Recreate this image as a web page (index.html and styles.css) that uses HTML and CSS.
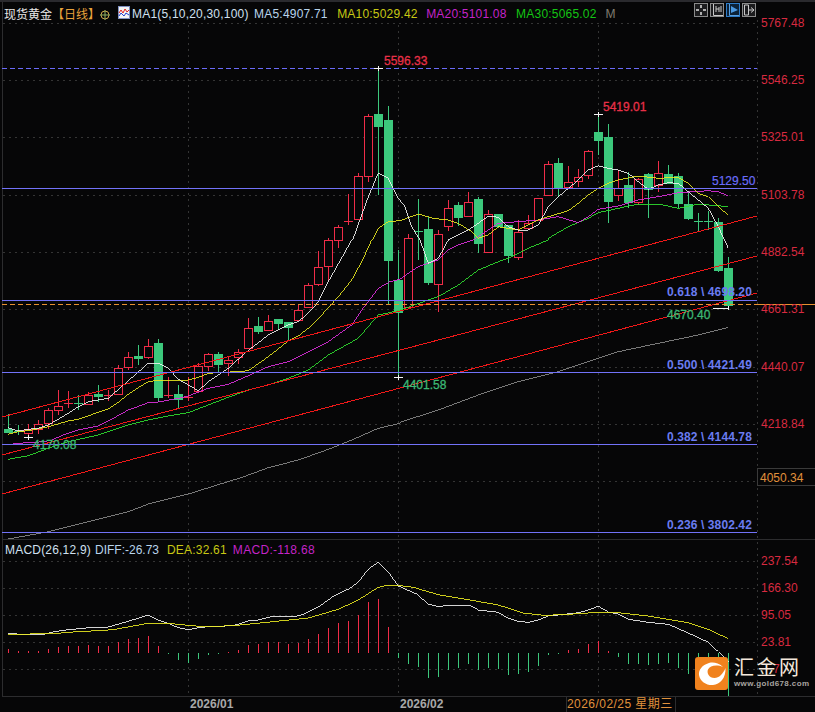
FILE: index.html
```html
<!DOCTYPE html>
<html lang="zh-CN">
<head>
<meta charset="utf-8">
<title>现货黄金 日线</title>
<link rel="stylesheet" href="styles.css">
</head>
<body>
<div class="terminal">
  <svg class="plot" id="plot" width="815" height="712" viewBox="0 0 815 712" xmlns="http://www.w3.org/2000/svg"></svg>

  <header class="legend">
    <span class="symbol">现货黄金</span><span class="period">【日线】</span>
    <svg class="zoom-icon" width="10" height="10" viewBox="0 0 10 10"><circle cx="5" cy="5" r="4" fill="none" stroke="#c9a24a"/><path d="M0 5H10M5 0V10" stroke="#8fb060"/></svg>
    <svg class="ma-icon" width="12" height="13" viewBox="0 0 12 13"><rect x=".5" y=".5" width="11" height="12" fill="#f4f4f4" stroke="#8090c0"/><path d="M1 7L3 4L5 7L7 3L9 6L11 4" fill="none" stroke="#e02020"/><path d="M1 10L3 7L6 10L8 7L11 9" fill="none" stroke="#2040d0"/></svg>
    <span class="val c-ma1">MA1(5,10,20,30,100)</span>
    <span class="val c-ma5">MA5:4907.71</span>
    <span class="val c-ma10">MA10:5029.42</span>
    <span class="val c-ma20">MA20:5101.08</span>
    <span class="val c-ma30">MA30:5065.02</span>
    <span class="val c-m">M</span>
    <div class="tools">
      <span class="tool"><svg width="12" height="12" viewBox="0 0 12 12"><path d="M6 1v3M6 8v3M1 6h3M8 6h3" stroke="#b0b0b0" stroke-width="2"/></svg></span>
      <span class="tool"><svg width="12" height="12" viewBox="0 0 12 12"><path d="M2.5 0v11.5H12M5 2v6M8 3v5M10 2v6M5 5h3" stroke="#c8c8c8" fill="none"/></svg></span>
      <span class="tool on"><svg width="12" height="12" viewBox="0 0 12 12"><path d="M2.5 0v11.5H12" stroke="#5aa0e0" fill="none"/><path d="M4 2L11 6L4 9Z" fill="#4a98e0"/></svg></span>
      <span class="tool"><svg width="12" height="12" viewBox="0 0 12 12"><path d="M1.5 1h4v10h-4zM5.5 6H11M8 3.500L11 6L8 8.500" stroke="#c8c8c8" fill="none"/></svg></span>
    </div>
  </header>

  <div class="macd-legend">
    <span class="val c-ma1">MACD(26,12,9)</span>
    <span class="val c-ma5">DIFF:-26.73</span>
    <span class="val c-ma10">DEA:32.61</span>
    <span class="val c-ma20">MACD:-118.68</span>
  </div>

  <div class="brand">
    <svg class="brand-mark" width="33" height="33" viewBox="0 0 33 33">
      <rect width="33" height="33" rx="3" fill="#f0821e"/>
      <path fill="#fff" d="M14 6C7 8 3.500 13 4 18C5 25 12 28.500 18 28C25 27.500 31 21 30.500 11C28 17 24 21 19.500 21C14 21 11.500 16 13 12.500C15 9 21 7 28 10C23 5.500 18 5 14 6Z"/>
    </svg>
    <div class="brand-text">
      <div class="brand-name">汇金网</div>
      <div class="brand-url">www.gold678.com</div>
    </div>
  </div>
</div>
<script src="chart.js"></script>
</body>
</html>
```

FILE: styles.css
```css
html, body { margin: 0; padding: 0; background: #060607; }
.terminal {
  position: relative;
  width: 815px;
  height: 712px;
  overflow: hidden;
  background: #060607;
  font-family: "Liberation Sans", "Noto Sans CJK SC", sans-serif;
  font-size: 12px;
}
.plot { position: absolute; inset: 0; }
.plot text { font-family: "Liberation Sans", "Noto Sans CJK SC", sans-serif; font-size: 12px; }
.plot .grid { stroke: #343434; stroke-dasharray: 2 4; }
.plot .frame { stroke: #2c2c2e; }
.plot .fib { stroke: #7272f8; }
.plot .lvl { fill: #6a7cf0; font-weight: 700; letter-spacing: .1px; }
.plot .axis { fill: #d82a40; }
.plot .up-text { fill: #e83048; stroke: #e83048; stroke-width: .3px; }
.plot .dn-text { fill: #3cb874; stroke: #3cb874; stroke-width: .3px; }
.plot .hl-text { fill: #6a6cf8; stroke: #6a6cf8; stroke-width: .2px; }
.plot .cur-text { fill: #e0913c; }
.plot .cur-date { fill: #e0913c; letter-spacing: .45px; }
.plot .date { fill: #a8a8a8; font-weight: 700; }
.plot polyline { stroke-width: .88px; }
.plot line, .plot polyline, .plot rect { shape-rendering: crispEdges; }
.legend {
  position: absolute;
  top: 0; left: 0; right: 0;
  height: 25px;
  box-sizing: border-box;
  border-top: 2px solid #2a2a2e;
  padding-left: 4px;
  display: flex;
  align-items: center;
  white-space: nowrap;
}
.symbol { color: #e8e8e8; }
.period { color: #e8a23c; }
.zoom-icon { margin-left: 0; margin-top: 3px; }
.ma-icon { margin-left: 8px; margin-right: 2px; margin-top: -3px; }
.val { letter-spacing: .2px; }
.c-ma1 { color: #d0e0f0; }
.c-ma5 { color: #b8d4ec; }
.c-ma10 { color: #c8c814; }
.c-ma20 { color: #c424c8; }
.c-ma30 { color: #14c414; }
.c-m { color: #807c70; }
.legend .c-ma1 { margin-right: 5.500px; }
.legend .c-ma5 { margin-right: 9.500px; }
.legend .c-ma10 { margin-right: 8.500px; }
.legend .c-ma20 { margin-right: 9.500px; }
.legend .c-ma30 { margin-right: 9px; }
.tools { position: absolute; top: 1px; left: 694px; display: flex; gap: 2px; }
.tool {
  box-sizing: border-box;
  width: 14px; height: 14px;
  border: 1px solid #8a8a8a;
  background: #1c1c1e;
  display: flex;
  overflow: hidden;
}
.tool.on { border-color: #2e7cc8; background: #0c2238; }
.macd-legend {
  position: absolute;
  top: 541px; left: 5px;
  height: 18px;
  display: flex;
  align-items: center;
  white-space: nowrap;
}
.macd-legend .c-ma1 { margin-right: 4px; }
.macd-legend .c-ma5 { margin-right: 8px; letter-spacing: 0; }
.macd-legend .c-ma10 { margin-right: 6px; }
.macd-legend .c-ma20 { letter-spacing: .3px; }
.brand { position: absolute; left: 695px; top: 657px; display: flex; gap: 6px; }
.brand-mark { display: block; }
.brand-text { display: flex; flex-direction: column; }
.brand-name {
  color: #f4e8dc;
  font-size: 20px;
  line-height: 22px;
  letter-spacing: 2.500px;
  white-space: nowrap;
}
.brand-url {
  color: #a8a4a0;
  font-size: 8px;
  line-height: 10px;
  font-weight: 700;
  letter-spacing: .4px;
  white-space: nowrap;
}
```

FILE: chart.js
```javascript
const NS = 'http://www.w3.org/2000/svg';
const svg = document.getElementById('plot');
function el(tag, attrs, text) {
  const e = document.createElementNS(NS, tag);
  for (const k in attrs) e.setAttribute(k, attrs[k]);
  if (text !== undefined) e.textContent = text;
  svg.appendChild(e);
  return e;
}
const GREEN = '#3cc87c', RED = '#f02c48';
function hline(y, x1, x2, cls, stroke) { const a = { x1, x2, y1: y + .5, y2: y + .5 }; if (cls) a.class = cls; if (stroke) a.stroke = stroke; return el('line', a); }
function vline(x, y1, y2, cls, stroke) { const a = { x1: x + .5, x2: x + .5, y1, y2 }; if (cls) a.class = cls; if (stroke) a.stroke = stroke; return el('line', a); }

/* grid */
[23, 80, 137, 195, 252, 309, 367, 424, 481, 561, 588, 615, 642, 669].forEach(y => hline(y, 3, 757, 'grid'));
[188, 398, 598].forEach(x => vline(x, 25, 695, 'grid'));
vline(757, 20, 695, 'grid');
/* frame */
vline(2, 2, 696, 'frame');
hline(539, 2, 815, 'frame', '#2e2e30');
hline(696, 2, 815, 'frame', '#2e2e30');
vline(566, 696, 712, 'frame', '#3a3a3a');
vline(675, 696, 712, 'frame', '#3a3a3a');

/* candles: [high, low, bodyTop, bodyBottom, isUp] pixel rows, 10px apart from x=8 */
const C = [
[414,432,429,432,0],[425,435,431,432,0],[424,437,429,433,1],[420,434,424,429,1],[408,429,410,423,1],
[390,415,406,410,1],[391,408,403,404,1],[395,410,403,404,0],[392,404,395,404,1],[385,402,394,396,0],
[390,401,395,396,1],[365,394,368,394,1],[352,370,357,367,1],[345,365,356,358,0],[339,359,346,357,1],
[339,402,343,397,0],[377,398,395,396,1],[385,409,394,399,0],[377,401,397,398,1],[363,391,366,391,1],
[353,371,354,366,1],[352,372,354,364,0],[357,376,360,363,1],[349,364,352,357,1],[318,348,328,348,1],
[317,334,326,331,0],[315,330,321,330,1],[319,330,319,323,0],[322,340,322,327,0],[304,320,310,320,1],
[283,307,285,307,1],[251,286,267,284,1],[238,281,240,266,1],[225,248,227,240,1],[194,225,221,222,1],
[173,219,176,219,1],[114,182,116,176,1],[68,195,114,126,0],[106,304,120,260,0],[250,377,280,312,0],
[234,307,238,307,1],[199,260,231,232,0],[217,285,229,282,0],[230,312,234,284,1],[200,231,208,226,1],
[202,226,205,217,0],[192,216,202,216,1],[197,253,199,243,0],[210,252,214,252,1],[214,228,214,226,0],
[225,263,225,255,0],[220,260,232,257,1],[215,230,223,228,1],[198,220,198,220,1],[161,195,164,195,1],
[158,197,163,187,0],[166,187,182,187,1],[169,187,177,181,1],[150,179,151,175,1],[114,155,132,140,0],
[124,223,137,201,0],[170,201,188,195,1],[172,208,185,202,0],[178,205,179,202,1],[173,218,174,189,0],
[161,192,173,185,1],[165,183,174,183,0],[173,208,176,203,0],[192,220,204,218,0],[213,231,221,222,0],
[211,230,221,222,0],[218,272,222,270,0],[257,308,268,305,0]
];
C.forEach((c, i) => {
  const x = 8 + 10 * i, col = c[4] ? RED : GREEN;
  vline(x, c[0], c[1], null, col);
  const h = c[3] - c[2];
  if (h <= 1) { hline(c[2], x - 4, x + 5, null, col); return; }
  if (c[4]) el('rect', { x: x - 3.5, y: c[2] + .5, width: 8, height: h, fill: '#060607', stroke: col });
  else el('rect', { x: x - 4, y: c[2], width: 9, height: h + 1, fill: col });
});

/* MACD histogram */
const BASE = 653;
const H = [507,513,513,513,507,501,498,498,495,498,498,486,477,474,468,498,519,537,546,534,522,520,516,510,495,492,486,486,492,489,477,462,444,429,423,405,366,357,441,531,
549,558,591,588,567,561,549,567,561,564,582,579,573,555,522,520,510,507,492,483,514,528,549,549,552,549,546,561,579,590,580,585,645];
H.forEach((z, i) => {
  const y = 480 + z / 3, x = 8 + 10 * i;
  if (y < BASE) vline(x, y, BASE, null, RED);
  else vline(x, BASE, y + 1, null, GREEN);
});

function pts(list) {
  const out = [];
  list.forEach(([ox, oy, s]) => {
    s.trim().split(/\s+/).forEach(p => {
      const [a, b] = p.split(',').map(Number);
      out.push((ox + a / 3).toFixed(1) + ',' + (oy + b / 3).toFixed(1));
    });
  });
  return out.join(' ');
}
function curve(list, stroke) { el('polyline', { points: pts(list), fill: 'none', stroke }); }

/* moving averages */
curve([[0,480,'25,177 145,155 265,125 385,95 445,72 565,42 700,0'],[0,240,'710,718 805,683 895,660 985,628 1055,600 1135,565 1200,550'],[400,240,'0,547 115,510 235,465 355,425 475,395 535,375 595,355 655,335 775,310 895,285 985,262']], '#8a8a8a');
curve([[0,240,'25,658 85,647 145,625 205,605 295,585 355,565 385,555 445,540 505,528 565,518 625,495 685,472 745,450 805,435 865,415 925,390 985,345 1075,295 1135,225 1195,212'],[400,240,'85,180 115,170 175,135 235,90 295,65 325,55 385,25 445,0'],[400,0,'445,715 505,680 565,655 595,638 655,625 715,612 775,612 835,625 895,612 985,620']], '#30e030');
curve([[0,240,'40,610 100,608 150,602 190,585 235,570 295,558 340,535 385,510 445,488 475,486 535,475 565,468 625,445 685,433 745,407 805,380 865,365 925,335 985,305 1055,255 1085,210 1135,145 1170,125 1200,118'],[400,240,'25,100 55,80 85,70 115,60 145,30 175,15 220,0'],[400,0,'265,690 295,670 355,665 415,660 475,650 535,668 565,650 595,628 655,618 715,600 775,590 835,578 925,572 955,575 985,588']], '#e030e0');
curve([[0,240,'25,583 55,575 85,572 145,560 205,543 235,538 295,517 325,507 355,487 385,463 415,443 445,425 475,421 535,421 565,420 595,412 625,400 725,394 745,392 805,350 865,303 895,288 925,265 965,225 1015,170 1055,120 1085,65 1115,0'],[0,0,'1120,715 1135,685 1165,665 1200,662'],[400,0,'55,642 100,655 145,660 175,670 215,695 235,715 265,705 295,680 355,690 385,675 415,660 445,650 505,632 535,610 565,585 595,565 625,550 655,540 715,528 775,535 835,532 865,550 895,580 925,590 955,620 985,645']], '#e8e820');
curve([[0,240,'25,563 55,573 85,568 115,565 145,555 205,520 235,500 265,485 325,475 385,422 445,370 475,370 505,385 535,418 595,452 625,425 685,385 740,335 805,285 865,255 895,245 925,220 955,185 985,125 1055,0'],[0,0,'1060,715 1105,590 1135,519 1165,535 1195,595'],[400,0,'15,620 35,680 60,720'],[400,240,'85,70 115,55 145,0'],[400,0,'175,705 205,690 235,670 265,648 295,652 325,680 355,690 385,690 415,675 445,620 475,590 535,540 565,510 595,497 625,505 655,510 685,520 715,545 745,568 775,555 805,548 835,550 865,575 895,600 925,625 955,680 985,745']], '#f0f0f0');

/* MACD lines */
curve([[0,480,'25,460 40,460 55,463 130,463 160,456 190,451 250,445 280,441 325,441 370,428 415,415 445,405 475,421 505,430 535,443 565,449 595,443 625,440 700,437 745,423 775,420 820,409 850,409 880,411 910,403 955,381 1000,349 1050,325 1075,306 1105,268 1135,246 1165,276 1195,318'],[400,480,'50,342 85,372 115,380 145,376 210,376 235,390 295,397 325,415 355,424 385,427 415,420 445,408 475,405 535,398 565,390 595,379 625,396 655,402 685,418 745,427 805,433 865,459 925,487 955,515 985,545']], '#f0f0f0');
curve([[0,480,'25,463 160,461 220,456 340,449 400,438 445,430 505,430 565,436 610,440 700,437 800,427 925,414 1015,388 1075,360 1135,322 1165,315 1200,317'],[400,480,'40,322 115,344 210,360 295,375 370,399 430,406 490,404 595,397 655,398 745,408 865,428 925,448 985,476']], '#e8e820');

/* trend lines */
[[2,417,757,216],[2,455,757,256],[2,494,757,293]].forEach(([x1,y1,x2,y2]) => el('line',{x1,y1,x2,y2,stroke:'#f01818'}));

/* fibonacci and reference levels */
[188,300,372,444,532].forEach(y => hline(y, 2, 757, 'fib'));
hline(68, 2, 757, null, '#6a6af8').setAttribute('stroke-dasharray', '5 3');
hline(304, 2, 757, null, '#e89030').setAttribute('stroke-dasharray', '5 3');
hline(304, 757, 815, null, '#e89030');

/* high and low markers */
[[374,383,68],[594,603,114],[394,403,377],[24,33,437],[713,729,308]].forEach(([a,b,y]) => hline(y,a,b,null,'#f4f4f4'));
[[378,66,71],[598,112,117],[398,375,380],[28,435,440],[728,306,310]].forEach(([x,a,b]) => vline(x,a,b,null,'#f4f4f4'));

/* price axis */
[['5767.48',27],['5546.25',84],['5325.01',141],['5103.78',199],['4882.54',256],['4661.31',313],['4440.07',371],['4218.84',428]].forEach(([t,y]) => el('text',{x:761,y,class:'axis'},t));
[['237.54',565],['166.30',592],['95.05',619],['23.81',646]].forEach(([t,y]) => el('text',{x:761,y,class:'axis'},t));
el('text',{x:773,y:673,class:'axis'},'7.');
el('rect',{x:757.5,y:468.5,width:60,height:17,fill:'#060607',stroke:'#3a3a3a'});
el('text',{x:760,y:482,class:'cur-text'},'4050.34');

/* chart callouts */
el('text',{x:384,y:65,class:'up-text'},'5596.33');
el('text',{x:603,y:111,class:'up-text'},'5419.01');
el('text',{x:712,y:185,class:'hl-text'},'5129.50');
el('text',{x:403,y:389,class:'dn-text'},'4401.58');
el('text',{x:33,y:449,class:'dn-text'},'4170.08');
el('text',{x:667,y:319,class:'dn-text'},'4670.40');
[['0.618 \\ 4698.20',296],['0.500 \\ 4421.49',369],['0.382 \\ 4144.78',441],['0.236 \\ 3802.42',529]].forEach(([t,y]) => el('text',{x:667,y,class:'lvl'},t));

/* date axis */
el('text',{x:190,y:708,class:'date'},'2026/01');
el('text',{x:400,y:708,class:'date'},'2026/02');
el('text',{x:567,y:708,class:'cur-date'},'2026/02/25 星期三');
```
